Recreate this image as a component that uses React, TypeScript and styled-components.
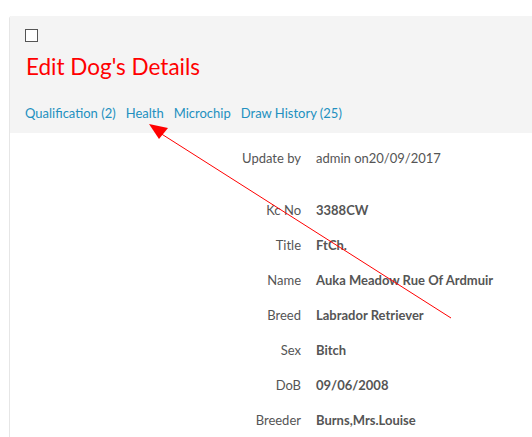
import React from "react";
import styled, { createGlobalStyle } from "styled-components";

const GlobalStyle = createGlobalStyle`
  html, body {
    margin: 0;
    padding: 0;
    background: #ffffff;
    font-family: Lato, "Open Sans", sans-serif;
  }
`;

const tabs = ["Qualification (2)", "Health", "Microchip", "Draw History (25)"];

const details = [
  { label: "Kc No", value: "3388CW" },
  { label: "Title", value: "FtCh." },
  { label: "Name", value: "Auka Meadow Rue Of Ardmuir" },
  { label: "Breed", value: "Labrador Retriever" },
  { label: "Sex", value: "Bitch" },
  { label: "DoB", value: "09/06/2008" },
  { label: "Breeder", value: "Burns,Mrs.Louise" },
];

function App() {
  return (
    <Page>
      <GlobalStyle />
      <Panel>
        <Header>
          <Check type="checkbox" />
          <Title>Edit Dog's Details</Title>
          <Tabs>
            {tabs.map((t) => (
              <Tab key={t}>{t}</Tab>
            ))}
          </Tabs>
        </Header>
        <Body>
          <Row $gap={32}>
            <Label>Update by</Label>
            <Value>admin on20/09/2017</Value>
          </Row>
          {details.map((d) => (
            <Row key={d.label} $gap={15}>
              <Label>{d.label}</Label>
              <Value $bold>{d.value}</Value>
            </Row>
          ))}
        </Body>
      </Panel>
      <Arrow width="532" height="437" viewBox="0 0 532 437">
        <line x1="451" y1="318" x2="160" y2="133" stroke="#ff0000" strokeWidth="1" />
        <polygon points="149,124 168,128 159,139" fill="#ff0000" />
      </Arrow>
    </Page>
  );
}

export default App;

const Page = styled.div`
  position: relative;
  width: 532px;
  height: 437px;
  overflow: hidden;
  padding: 16px 0 0 9px;
  box-sizing: border-box;
`;

const Panel = styled.div`
  border-left: 1px solid #e6e6e6;
  border-top-left-radius: 3px;
  overflow: hidden;
  height: 100%;
`;

const Header = styled.div`
  background: #f4f4f4;
  padding: 13px 16px 11px 15px;
  height: 117px;
  box-sizing: border-box;
`;

const Check = styled.input`
  appearance: none;
  display: block;
  width: 13px;
  height: 13px;
  margin: 0 0 0 0;
  border: 1px solid #555555;
  background: #ffffff;
  box-sizing: border-box;
`;

const Title = styled.h1`
  margin: 10px 0 0 1px;
  font-size: 22.5px;
  font-weight: 400;
  color: #ff0000;
  line-height: 30px;
`;

const Tabs = styled.div`
  display: flex;
  gap: 10px;
  margin-top: 21px;
`;

const Tab = styled.a`
  font-size: 13px;
  color: #2290c0;
  line-height: 20px;
  cursor: pointer;
`;

const Body = styled.div`
  padding-top: 15px;
`;

const Row = styled.div<{ $gap: number }>`
  display: grid;
  grid-template-columns: 291px 1fr;
  column-gap: 15px;
  font-size: 13px;
  line-height: 20px;
  margin-bottom: ${(p) => p.$gap}px;
`;

const Label = styled.div`
  text-align: right;
  color: #555555;
`;

const Value = styled.div<{ $bold?: boolean }>`
  color: #555555;
  font-weight: ${(p) => (p.$bold ? 700 : 400)};
  white-space: nowrap;
`;

const Arrow = styled.svg`
  position: absolute;
  left: 0;
  top: 0;
  pointer-events: none;
`;
